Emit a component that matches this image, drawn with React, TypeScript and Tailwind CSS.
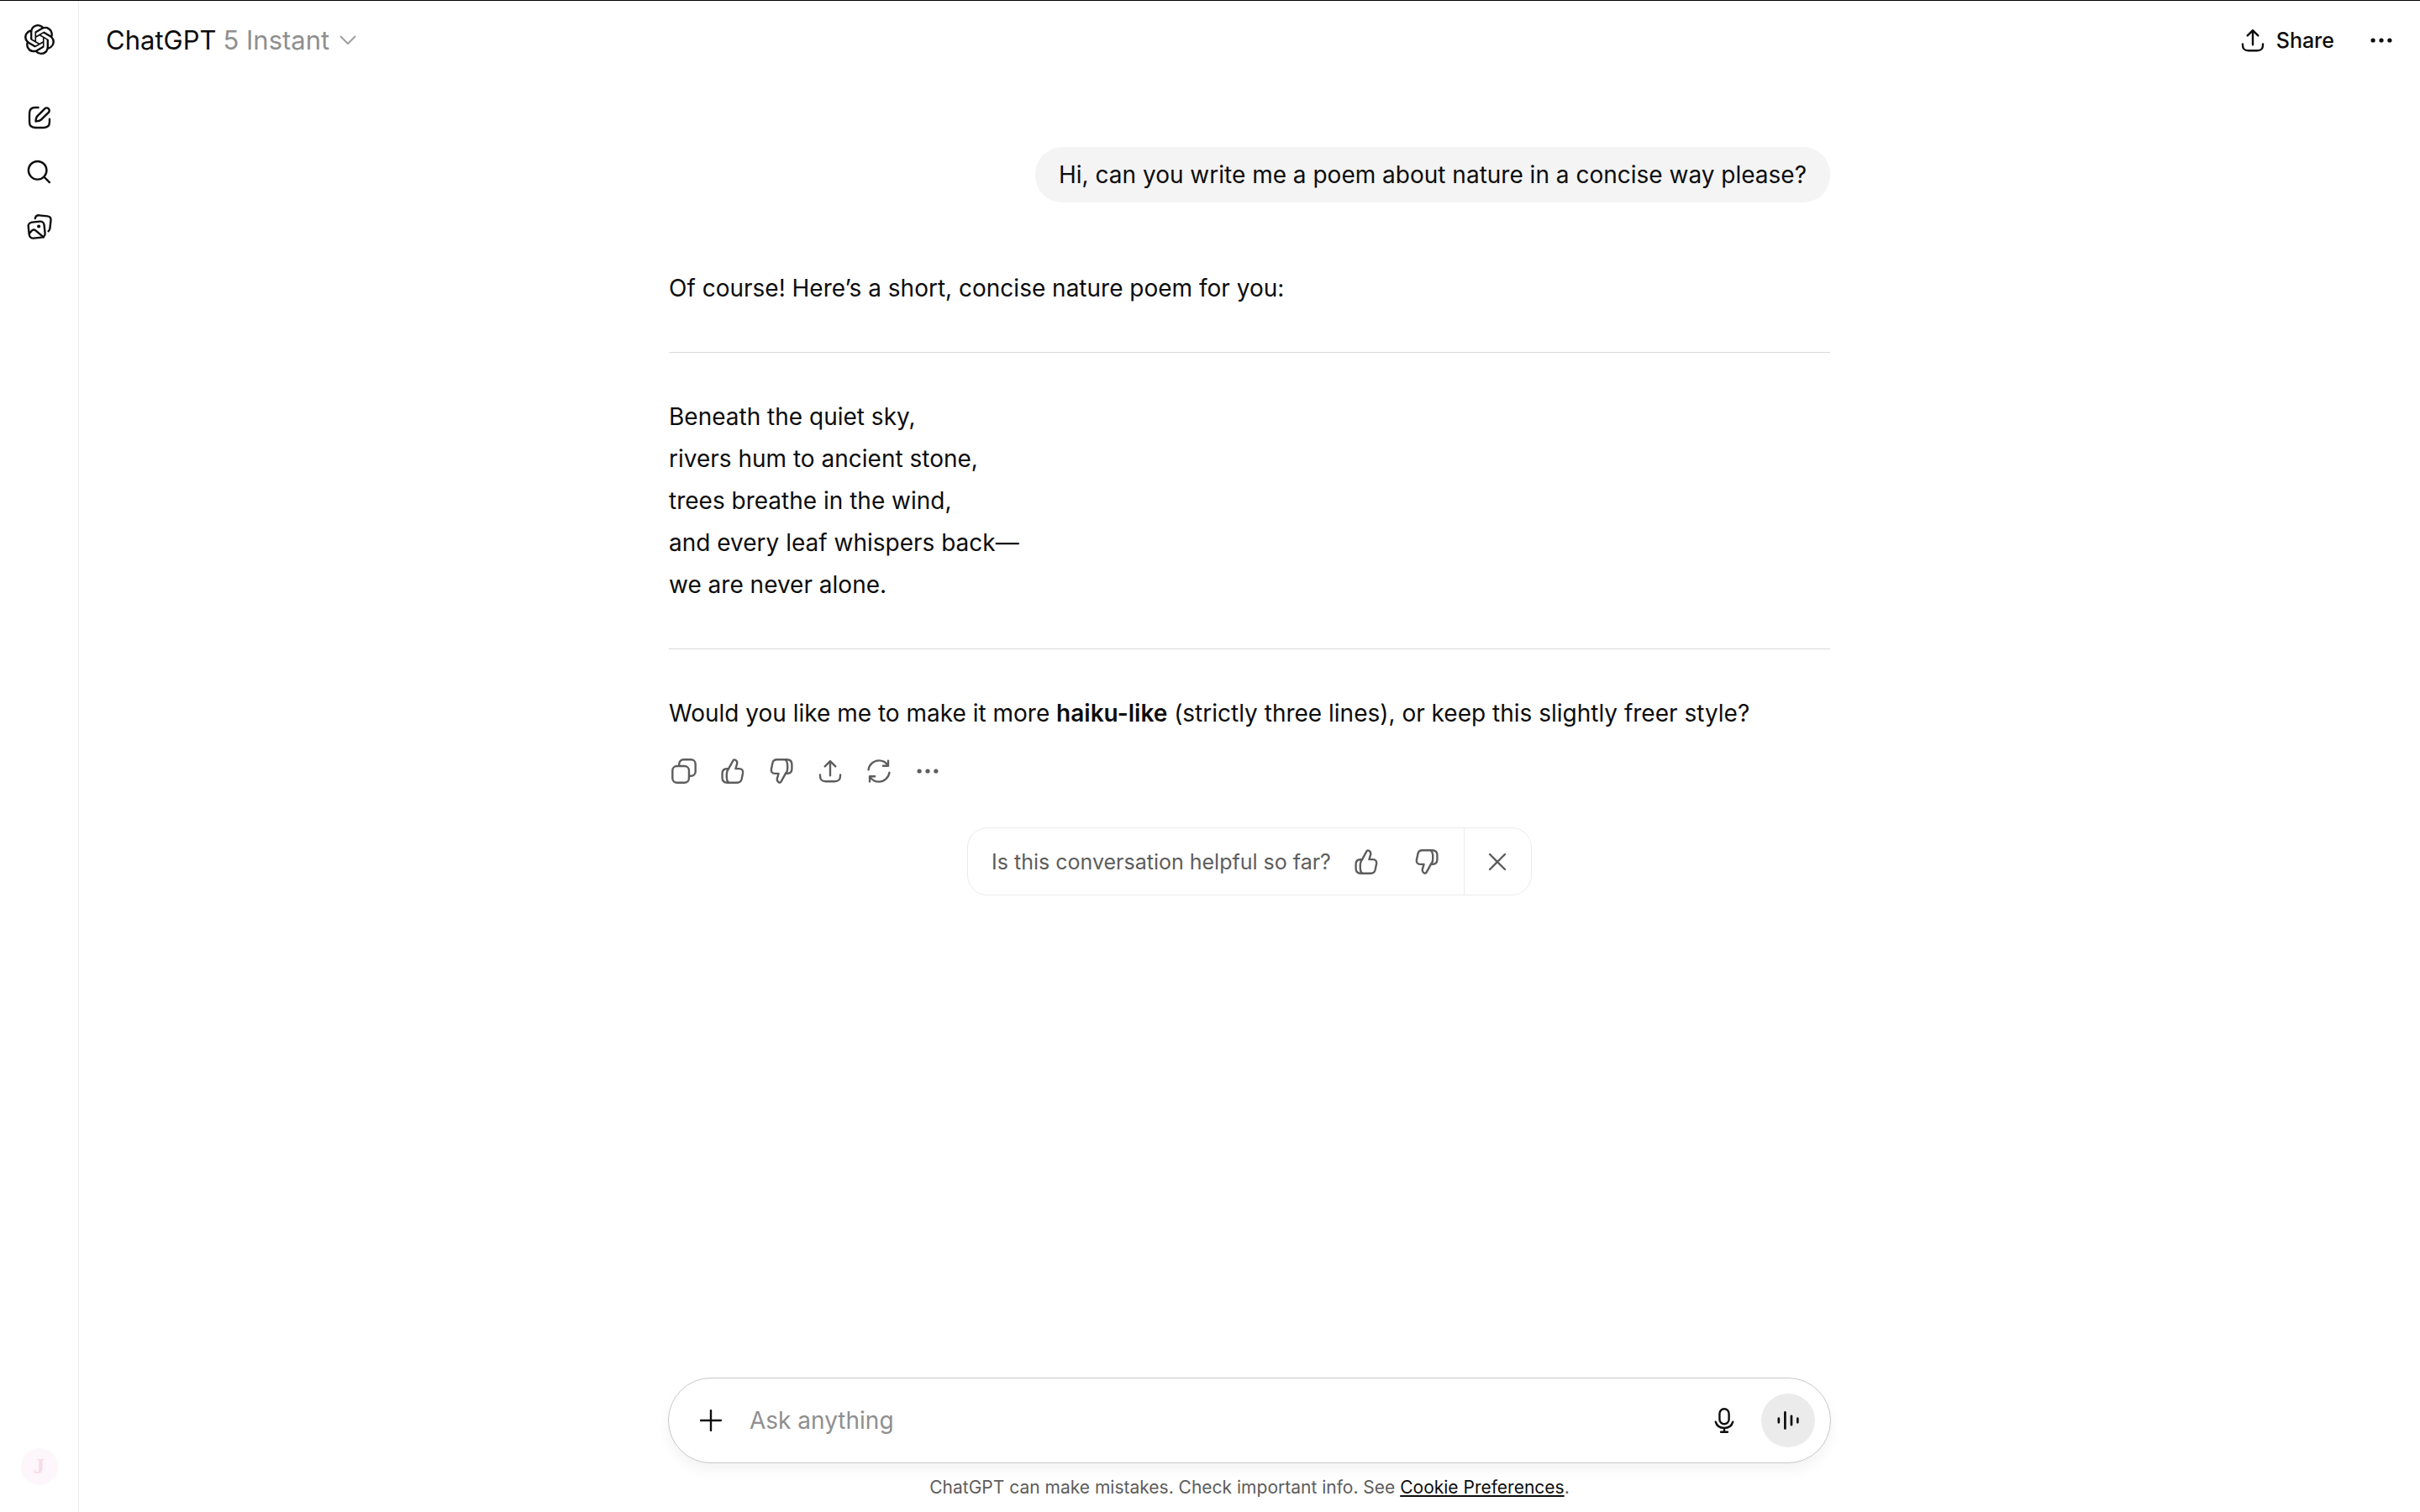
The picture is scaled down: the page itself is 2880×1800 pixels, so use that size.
import type { ReactNode } from "react";
import { SiOpenai } from "react-icons/si";

function Icon({ children, className = "size-9" }: { children: ReactNode; className?: string }) {
  return (
    <svg
      viewBox="0 0 20 20"
      fill="none"
      stroke="currentColor"
      strokeWidth="1.33"
      strokeLinecap="round"
      strokeLinejoin="round"
      aria-hidden="true"
      className={`shrink-0 ${className}`}
    >
      {children}
    </svg>
  );
}

const NewChatIcon = () => (
  <Icon>
    <path d="M9.2 3.35H7.2C4.5 3.35 3.35 4.5 3.35 7.2V12.8C3.35 15.5 4.5 16.65 7.2 16.65H12.8C15.5 16.65 16.65 15.5 16.65 12.8V10.9" />
    <path d="M13.5 4.1A1.75 1.75 0 0 1 16 6.6L11 11.5C10.3 12.2 9 12.4 7.5 12.5C7.6 11 7.8 9.8 8.5 9.1Z" />
  </Icon>
);

const SearchIcon = () => (
  <Icon>
    <circle cx="8.7" cy="8.8" r="6" />
    <path d="M13.1 13.2L16.6 16.7" />
  </Icon>
);

const LibraryIcon = () => (
  <Icon>
    <rect x="2.9" y="6.7" width="10.5" height="10.6" rx="2.6" transform="rotate(-6 8.15 12)" />
    <path d="M7.1 4.5C7.4 3 8.3 2.3 9.8 2.4L15.3 3C16.9 3.2 17.7 4.1 17.5 5.7L16.9 11.1C16.8 12 16.5 12.5 15.9 12.9" />
    <path d="M3.3 14.4L4.7 12.8C5.6 11.8 6.7 11.8 7.6 12.6L12.7 16.9" />
    <circle cx="9.5" cy="9.7" r="1.15" fill="currentColor" stroke="none" />
  </Icon>
);

const ShareIcon = () => (
  <Icon>
    <path d="M3.3 12.5V12.8C3.3 15.7 4.3 16.8 7 16.8H13C15.7 16.8 16.7 15.7 16.7 12.8V12.5" />
    <path d="M10 12.9V3.4M6.5 6.9L10 3.4L13.5 6.9" />
  </Icon>
);

const DotsIcon = () => (
  <Icon>
    <g fill="currentColor" stroke="none">
      <circle cx="4.5" cy="10" r="1.45" />
      <circle cx="10" cy="10" r="1.45" />
      <circle cx="15.5" cy="10" r="1.45" />
    </g>
  </Icon>
);

const CopyIcon = () => (
  <Icon>
    <rect x="2.4" y="6.7" width="10.9" height="10.9" rx="2.9" />
    <path d="M6.8 6.3V5.4A2.9 2.9 0 0 1 9.7 2.4H14.7A2.9 2.9 0 0 1 17.6 5.3V10.3A2.9 2.9 0 0 1 14.7 13.2H13.6" />
  </Icon>
);

const thumb = (
  <>
    <path d="M7.2 8.5L10.2 3.1C10.6 2.3 11.3 2.3 12 2.8C12.9 3.4 13.1 4.3 12.8 5.3L11.9 8.4H14.3C16.2 8.4 17 9.6 16.7 11.4L15.9 15.3C15.5 16.9 14.6 17.6 13 17.6H6.4C4.2 17.6 3.1 16.5 3.1 14.3V11.7C3.1 9.7 4.1 8.5 6 8.5H7.2" />
    <path d="M7.2 8.5C6.3 9.4 6 10.3 6 11.7V14.3C6 15.8 6.4 16.8 7.3 17.6" />
  </>
);

const ThumbUpIcon = () => <Icon>{thumb}</Icon>;

const ThumbDownIcon = () => (
  <Icon>
    <g transform="rotate(180 10 10)">{thumb}</g>
  </Icon>
);

const RetryIcon = () => (
  <Icon>
    <path d="M3.1 9.1C3.5 5.7 6.4 3 10 3C12.4 3 14.6 4.2 15.9 6.2" />
    <path d="M16.1 3.1V6.5H12.7" />
    <path d="M16.9 10.9C16.5 14.3 13.6 17 10 17C7.6 17 5.4 15.8 4.1 13.8" />
    <path d="M3.9 16.9V13.5H7.3" />
  </Icon>
);

const CloseIcon = () => (
  <Icon>
    <path d="M5 5L15 15M15 5L5 15" />
  </Icon>
);

const PlusIcon = () => (
  <Icon>
    <path d="M10 3.4V16.6M3.4 10H16.6" />
  </Icon>
);

const MicIcon = () => (
  <Icon>
    <rect x="6.9" y="2.4" width="6.2" height="10" rx="3.1" />
    <path d="M4.3 10.9C5 13.4 7.2 15 10 15C12.8 15 15 13.4 15.7 10.9M10 15V17.6M7.8 17.6H12.2" />
  </Icon>
);

const VoiceIcon = () => (
  <Icon>
    <path strokeWidth="1.5" d="M3.8 8.7V11.3M8 4.7V15.3M12.2 7.1V12.9M16.3 8.7V11.3" />
  </Icon>
);

function IconButton({ label, className, children }: { label: string; className: string; children: ReactNode }) {
  return (
    <button type="button" aria-label={label} className={`flex shrink-0 items-center justify-center ${className}`}>
      {children}
    </button>
  );
}

const poem = [
  "Beneath the quiet sky,",
  "rivers hum to ancient stone,",
  "trees breathe in the wind,",
  "and every leaf whispers back—",
  "we are never alone.",
];

function Sidebar() {
  return (
    <aside className="flex w-[94px] shrink-0 flex-col items-center border-r border-[#ededed] pb-8">
      <a href="#" aria-label="Home" className="flex h-[92px] items-center">
        <SiOpenai className="size-9" />
      </a>
      <nav className="mt-[14px] flex flex-col">
        <IconButton label="New chat" className="h-[65px] w-[65px]">
          <NewChatIcon />
        </IconButton>
        <IconButton label="Search chats" className="h-[65px] w-[65px]">
          <SearchIcon />
        </IconButton>
        <IconButton label="Library" className="h-[65px] w-[65px]">
          <LibraryIcon />
        </IconButton>
      </nav>
      <button
        type="button"
        aria-label="Profile"
        className="mt-auto flex size-11 items-center justify-center rounded-full bg-[#fdf6fb] font-['Liberation_Serif',serif] text-[26px] font-bold leading-none text-[#f8d9e6]"
      >
        J
      </button>
    </aside>
  );
}

function Header() {
  return (
    <header className="flex h-[93px] shrink-0 items-center justify-between pr-[22px] pl-8">
      <button type="button" className="flex items-center text-[31px] leading-10">
        <span>ChatGPT</span>
        <span className="ml-2 text-[#8f8f8f]">5 Instant</span>
        <svg viewBox="0 0 20 12" fill="none" stroke="#a0a0a0" strokeWidth="2" strokeLinecap="round" strokeLinejoin="round" aria-hidden="true" className="ml-3 h-3 w-5">
          <path d="M1.5 1.5L10 10L18.5 1.5" />
        </svg>
      </button>
      <div className="flex items-center">
        <button type="button" className="flex items-center gap-[10px] text-[25px] leading-9 font-medium">
          <ShareIcon />
          Share
        </button>
        <IconButton label="More options" className="ml-8 size-12">
          <DotsIcon />
        </IconButton>
      </div>
    </header>
  );
}

function Feedback() {
  return (
    <div className="mt-[38px] flex h-[81px] self-center rounded-[24px] border border-[#ebebeb] text-[#5d5d5d]">
      <div className="flex items-center pr-2 pl-7">
        <span className="text-[25px] leading-9">Is this conversation helpful so far?</span>
        <IconButton label="Helpful" className="ml-[6px] size-[72px]">
          <ThumbUpIcon />
        </IconButton>
        <IconButton label="Not helpful" className="size-[72px]">
          <ThumbDownIcon />
        </IconButton>
      </div>
      <IconButton label="Dismiss" className="w-20 border-l border-[#ebebeb]">
        <CloseIcon />
      </IconButton>
    </div>
  );
}

function Conversation() {
  return (
    <main className="mx-auto flex w-full max-w-[1382px] flex-1 flex-col pt-[81px] text-[28px] leading-[50px]">
      <p className="self-end rounded-[32px] bg-[#f4f4f4] px-7 py-2">
        Hi, can you write me a poem about nature in a concise way please?
      </p>
      <article className="mt-[77px] flex flex-col">
        <p>Of course! Here’s a short, concise nature poem for you:</p>
        <hr className="my-[51px] border-[#d9d9d9]" />
        <p>
          {poem.map((line) => (
            <span key={line} className="block">
              {line}
            </span>
          ))}
        </p>
        <hr className="my-[51px] border-[#d9d9d9]" />
        <p>
          Would you like me to make it more <strong className="font-semibold">haiku-like</strong> (strictly three lines),
          or keep this slightly freer style?
        </p>
      </article>
      <div className="mt-[15px] -ml-[11px] flex text-[#5d5d5d]">
        <IconButton label="Copy" className="h-[58px] w-[58px]">
          <CopyIcon />
        </IconButton>
        <IconButton label="Good response" className="h-[58px] w-[58px]">
          <ThumbUpIcon />
        </IconButton>
        <IconButton label="Bad response" className="h-[58px] w-[58px]">
          <ThumbDownIcon />
        </IconButton>
        <IconButton label="Share response" className="h-[58px] w-[58px]">
          <ShareIcon />
        </IconButton>
        <IconButton label="Try again" className="h-[58px] w-[58px]">
          <RetryIcon />
        </IconButton>
        <IconButton label="More actions" className="h-[58px] w-[58px]">
          <DotsIcon />
        </IconButton>
      </div>
      <Feedback />
    </main>
  );
}

function Composer() {
  return (
    <footer className="mx-auto flex w-full max-w-[1384px] flex-col items-center">
      <form className="flex h-[102px] w-full items-center rounded-full border border-[#c8c8c8] bg-white pr-[18px] pl-[18px] shadow-[0_8px_16px_rgba(0,0,0,0.05)]">
        <IconButton label="Add files" className="size-16">
          <PlusIcon />
        </IconButton>
        <input
          type="text"
          aria-label="Ask anything"
          placeholder="Ask anything"
          className="ml-[14px] min-w-0 flex-1 bg-transparent text-[28px] leading-10 outline-none placeholder:text-[#8f8f8f]"
        />
        <IconButton label="Dictate" className="mr-3 size-16">
          <MicIcon />
        </IconButton>
        <IconButton label="Use voice mode" className="size-16 rounded-full bg-[#ebebeb]">
          <VoiceIcon />
        </IconButton>
      </form>
      <p className="py-[15px] text-[21px] leading-7 text-[#5d5d5d]">
        ChatGPT can make mistakes. Check important info. See{" "}
        <a href="#" className="text-[#0d0d0d] underline underline-offset-2">
          Cookie Preferences
        </a>
        .
      </p>
    </footer>
  );
}

export default function App() {
  return (
    <div className="flex min-h-screen border-t border-black bg-white font-[Inter,'Liberation_Sans',sans-serif] text-[#0d0d0d]">
      <Sidebar />
      <div className="flex min-w-0 flex-1 flex-col">
        <Header />
        <Conversation />
        <Composer />
      </div>
    </div>
  );
}
